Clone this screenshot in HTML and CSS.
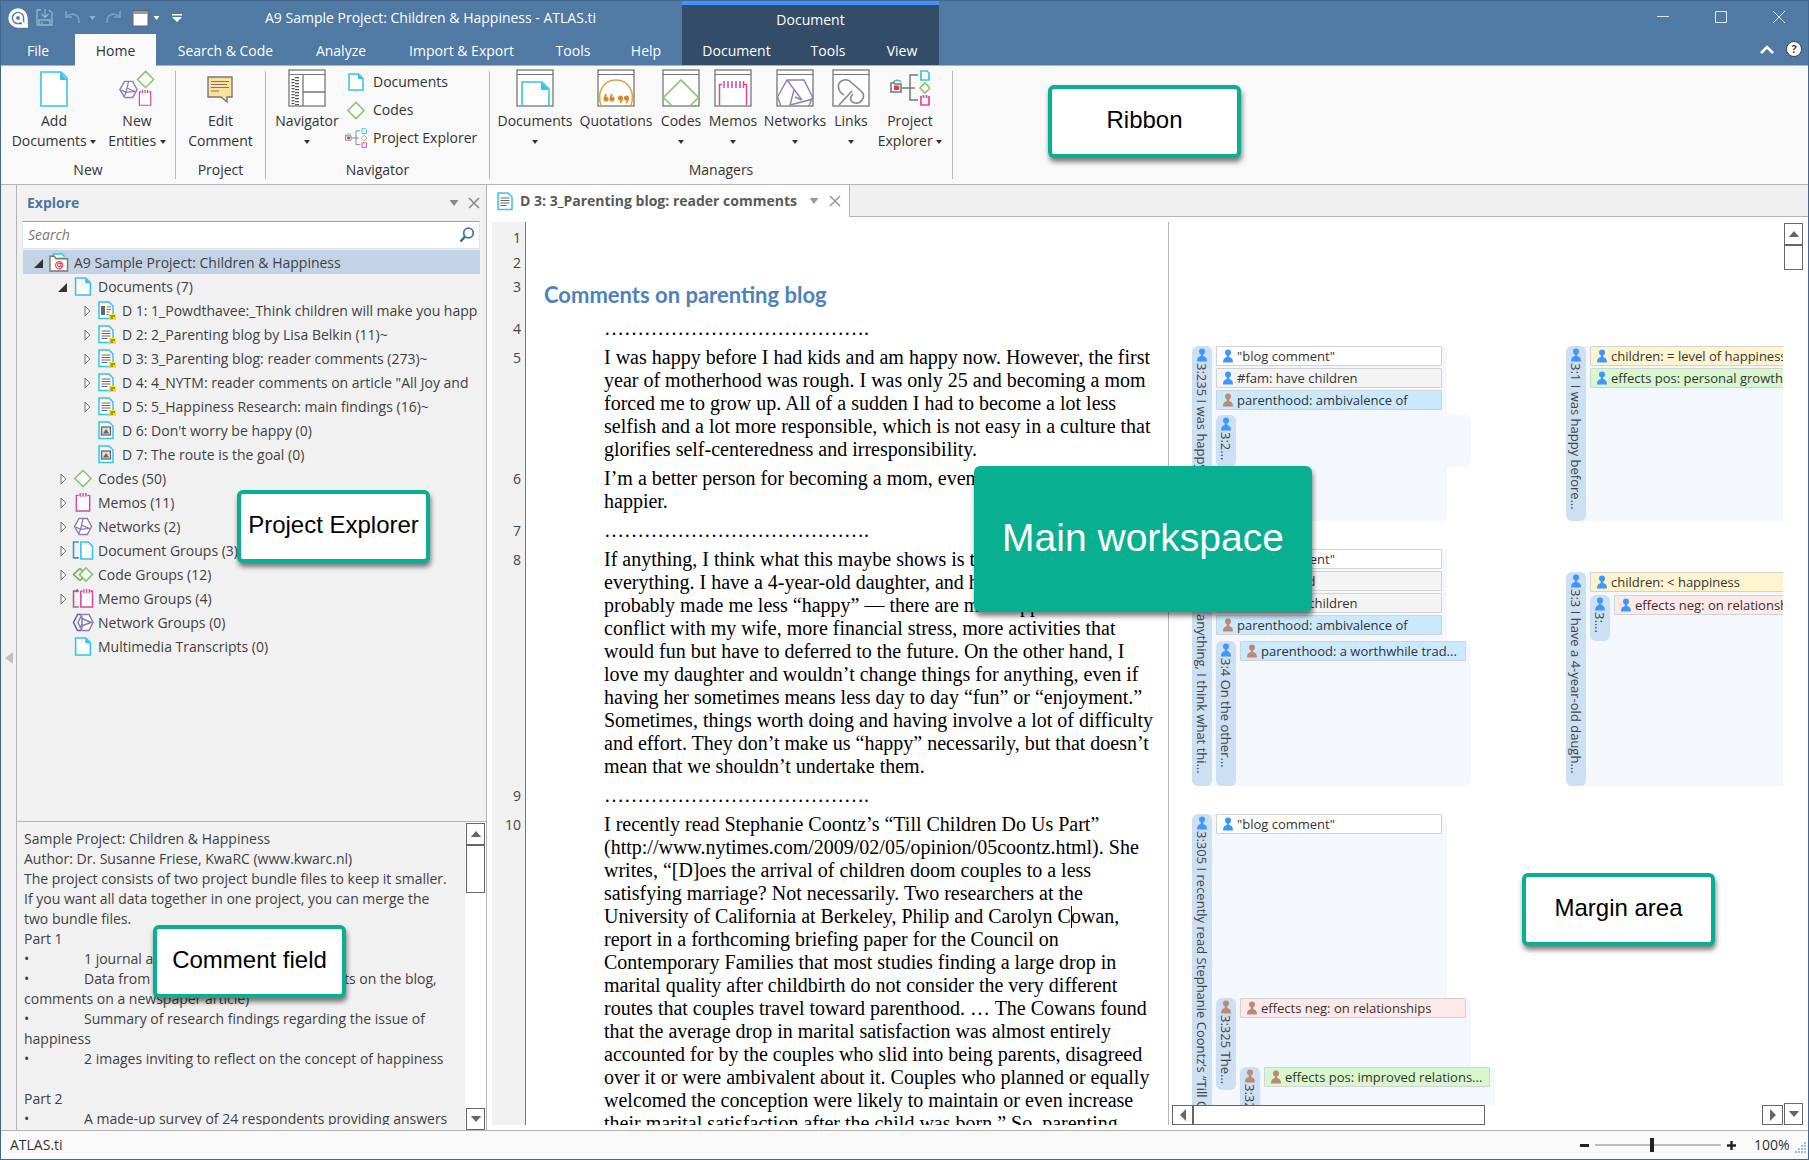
FILE: index.html
```html
<!DOCTYPE html>
<html lang="en">
<head>
<meta charset="utf-8">
<title>A9 Sample Project: Children &amp; Happiness - ATLAS.ti</title>
<link rel="stylesheet" href="styles.css">
</head>
<body>
<svg class="defs" aria-hidden="true">
  <symbol id="i-doc" viewBox="0 0 16 18"><path d="M1 1h9.500l4.500 4.500V17H1z" fill="#fff" stroke="#36c3ea" stroke-width="1.500"/><path d="M10 1v5h5z" fill="#36c3ea"/></symbol>
  <symbol id="i-doctext" viewBox="0 0 18 19"><path d="M1 1h10l4 4v12.500H1z" fill="#fff" stroke="#36c3ea" stroke-width="1.500"/><path d="M3.500 6h9M3.500 8.500h9M3.500 11h9M3.500 13.500h6" stroke="#666" stroke-width="1.200"/></symbol>
  <symbol id="i-doccom" viewBox="0 0 18 19"><use href="#i-doctext"/><rect x="11" y="13" width="7" height="6" fill="#ffe100"/><path d="M12.500 15h4.500M12.500 17h2.500" stroke="#554800"/></symbol>
  <symbol id="i-docpdf" viewBox="0 0 18 19"><path d="M1 1h10l4 4v12.500H1z" fill="#fff" stroke="#36c3ea" stroke-width="1.500"/><rect x="3" y="5" width="4" height="9" fill="#666"/><path d="M8.500 6h4.500M8.500 8.500h4.500M8.500 11h3M8.500 13.500h2" stroke="#777" stroke-width="1.200"/><rect x="11" y="13" width="7" height="6" fill="#ffe100"/><path d="M12.500 15h4.500M12.500 17h2.500" stroke="#554800"/></symbol>
  <symbol id="i-docimg" viewBox="0 0 18 19"><path d="M1 1h10l4 4v12.500H1z" fill="#fff" stroke="#36c3ea" stroke-width="1.500"/><rect x="3.500" y="6" width="9" height="8" fill="#ddd" stroke="#666" stroke-width="1.300"/><path d="M5 12.500l3-4.500 3 4.500z" fill="#666"/></symbol>
  <symbol id="i-code" viewBox="0 0 20 20"><path d="M10 1.500l8.500 8.500-8.500 8.500L1.500 10z" fill="#fff" stroke="#86c76a" stroke-width="1.600"/></symbol>
  <symbol id="i-memo" viewBox="0 0 16 20"><path d="M1 2.500h2.500M12.500 2.500H15M1 2v17h14V2" fill="#fff" stroke="#d9479c" stroke-width="1.500"/><path d="M5 0v4M8 0v4M11 0v4" stroke="#d9479c" stroke-width="1.500"/></symbol>
  <symbol id="i-net" viewBox="0 0 20 20"><path d="M6 1.500h8.500L19 10l-4.500 8.500H6L1 10z" fill="#fff" stroke="#8d7db8" stroke-width="1.500"/><path d="M10 2L7.500 13 2 10.500M8.500 8.500l8 3.500-9 1-2 4.500" fill="none" stroke="#8d7db8" stroke-width="1.400"/></symbol>
  <symbol id="i-docgrp" viewBox="0 0 20 18"><path d="M6 1H1v15h5" fill="none" stroke="#4b93b1" stroke-width="1.500"/><path d="M8 1h7l4 4v12H8z" fill="#fff" stroke="#36c3ea" stroke-width="1.500"/></symbol>
  <symbol id="i-codegrp" viewBox="0 0 22 16"><path d="M8 2L1.500 8 8 14M8 2l3 3M8 14l3-3" fill="none" stroke="#75ad5c" stroke-width="1.700"/><path d="M14 1.500L20.500 8 14 14.500 7.500 8z" fill="#fff" stroke="#86c76a" stroke-width="1.700"/></symbol>
  <symbol id="i-memogrp" viewBox="0 0 20 18"><path d="M6 2H1v15h5M4.500 0v3" fill="none" stroke="#b0657c" stroke-width="1.500"/><path d="M8 2v15h11V2h-2M8 2h1.500" fill="#fff" stroke="#d9479c" stroke-width="1.500"/><path d="M11 0v4M13.500 0v4M16 0v4" stroke="#d9479c" stroke-width="1.200"/></symbol>
  <symbol id="i-netgrp" viewBox="0 0 22 18"><path d="M9 1H5.500L1.500 9l4 8H9" fill="none" stroke="#6c5ca0" stroke-width="1.500"/><path d="M10 1h7l4 8-4 8h-7L6 9z" fill="#fff" stroke="#8d7db8" stroke-width="1.500"/><path d="M10 3v12M10 5l9 4-11 4" fill="none" stroke="#8d7db8" stroke-width="1.700"/></symbol>
  <symbol id="i-project" viewBox="0 0 22 20"><path d="M5 5V1h9l3 3" fill="#fff" stroke="#36c3ea" stroke-width="1.500"/><path d="M1.500 19V3.500H6l2 2.500h12V19z" fill="#fff" stroke="#777" stroke-width="1.500"/><path d="M14 15.500a3.800 3.800 0 1 1 1-3v1c0 1.500-2 1.500-2 0v-3m0 2a1.800 1.800 0 1 1-3.600 0 1.800 1.800 0 0 1 3.600 0" fill="none" stroke="#e8394a" stroke-width="1.100"/></symbol>
  <symbol id="i-pe" viewBox="0 0 40 36"><path d="M3 13c1-3 6-4 8-1" fill="none" stroke="#36c3ea" stroke-width="1.500"/><path d="M1 22V13h3l1 1h6v8z" fill="#fff" stroke="#777" stroke-width="1.600"/><rect x="4" y="15.500" width="5" height="4.500" fill="#e8394a"/><path d="M12 18h13M28 5h-8v25h8" fill="none" stroke="#777" stroke-width="1.500"/><path d="M31 1h6l2 2v7h-8z" fill="#fff" stroke="#36c3ea" stroke-width="1.700"/><path d="M35 13l5 5-5 5-5-5z" fill="#fff" stroke="#86c76a" stroke-width="1.700"/><path d="M31 26v9h8v-9M33.500 25v3M36.500 25v3" fill="none" stroke="#d9479c" stroke-width="1.700"/></symbol>
  <symbol id="i-frame" viewBox="0 0 38 38"><rect x="1" y="1" width="36" height="36" fill="#fff" stroke="#777" stroke-width="1.300"/><path d="M1 5.500h36" stroke="#777" stroke-width="1.200"/></symbol>
  <symbol id="i-user" viewBox="0 0 10 14"><circle cx="5" cy="3.500" r="3" fill="currentColor"/><path d="M3.800 6h2.400v2C9 8.500 10 10.500 10 13.500H0C0 10.500 1 8.500 3.800 8z" fill="currentColor"/></symbol>
  <symbol id="i-down" viewBox="0 0 6 4"><path d="M0 0h6L3 4z" fill="currentColor"/></symbol>
  <symbol id="i-up" viewBox="0 0 12 7"><path d="M0 7h12L6 0z" fill="currentColor"/></symbol>
  <symbol id="i-open" viewBox="0 0 12 12"><path d="M10 2v9H1z" fill="#333"/></symbol>
  <symbol id="i-shut" viewBox="0 0 12 12"><path d="M4 1v10L9 6z" fill="#fff" stroke="#777"/></symbol>
  <symbol id="i-x" viewBox="0 0 12 12"><path d="M1 1l10 10M11 1L1 11" fill="none" stroke="currentColor" stroke-width="1.500"/></symbol>
</svg>

<div class="window">
  <header class="header">
    <div class="head-main">
      <div class="title-row">
        <div class="quick">
          <svg width="20" height="20" viewBox="0 0 20 20"><path d="M10 18a8 8 0 1 1 8-8v8M10 18h10" fill="none" stroke="#fff" stroke-width="3.400"/><circle cx="10" cy="10" r="3.400" fill="none" stroke="#fff" stroke-width="3"/><path d="M13.500 10c0 4 1 6 4 7" fill="none" stroke="#fff" stroke-width="2"/></svg>
          <button aria-label="Save"><svg width="17" height="17" viewBox="0 0 17 17" fill="none" stroke="#8fb6cf" stroke-width="1.300"><path d="M5 1H1v15h15V4l-3-3M3 16v-5h11v5M6 12.500v3"/><path d="M9 0v8M5.500 5L9 8.500 12.500 5"/></svg></button>
          <button aria-label="Undo"><svg width="20" height="17" viewBox="0 0 20 17" fill="none" stroke="#7ea3c2" stroke-width="1.700"><path d="M5 2v6h6M5 8c3-3 8-4 11-1 2 2 2 5 2 7"/></svg></button>
          <button aria-label="Undo history" class="dim"><svg width="7" height="4"><use href="#i-down"/></svg></button>
          <button aria-label="Redo"><svg width="18" height="17" viewBox="0 0 18 17" fill="none" stroke="#7ea3c2" stroke-width="1.700"><path d="M16 2v6h-6M16 8C13 5 8 4 5 7c-2 2-2 5-2 7"/></svg></button>
          <button aria-label="Window layout" class="split"><svg width="20" height="18" viewBox="0 0 20 18"><rect x="3" y="1.500" width="15" height="15.500" fill="#fff" stroke="#666"/><path d="M3 3.500h15" stroke="#999" stroke-width="3"/></svg><svg width="7" height="4"><use href="#i-down"/></svg></button>
          <button aria-label="Customize toolbar"><svg width="16" height="10" viewBox="0 0 16 10" fill="#fff"><path d="M4 1h10v1.500H4zM4 4h10L9 9z"/></svg></button>
        </div>
        <div class="app-title">A9 Sample Project: Children &amp; Happiness - ATLAS.ti</div>
      </div>
      <nav class="tabs">
        <button class="tab w74">File</button>
        <button class="tab w81 active">Home</button>
        <button class="tab w139">Search &amp; Code</button>
        <button class="tab w92">Analyze</button>
        <button class="tab w149">Import &amp; Export</button>
        <button class="tab w74">Tools</button>
        <button class="tab w72">Help</button>
      </nav>
    </div>
    <div class="context">
      <div class="context-title">Document</div>
      <nav class="tabs">
        <button class="tab w109">Document</button>
        <button class="tab w74">Tools</button>
        <button class="tab w74">View</button>
      </nav>
    </div>
    <div class="head-right">
      <div class="win-btns">
        <button aria-label="Minimize"><svg width="12" height="12" viewBox="0 0 12 12"><path d="M0 5.500h12" stroke="#dfe9f2"/></svg></button>
        <button aria-label="Maximize"><svg width="12" height="12" viewBox="0 0 12 12"><path d="M.5.500h11v11H.5z" fill="none" stroke="#dfe9f2"/></svg></button>
        <button aria-label="Close"><svg width="12" height="12" viewBox="0 0 12 12"><path d="M0 0l12 12M12 0L0 12" stroke="#dfe9f2"/></svg></button>
      </div>
      <div class="help-btns">
        <button aria-label="Collapse ribbon"><svg width="14" height="9" viewBox="0 0 14 9"><path d="M1 8l6-6 6 6" fill="none" stroke="#fff" stroke-width="2.600"/></svg></button>
        <button aria-label="Help" class="help">?</button>
      </div>
    </div>
  </header>

  <section class="ribbon">
    <div class="group g-new">
      <div class="items">
        <button class="big w92"><svg width="30" height="38" viewBox="0 0 30 38"><path d="M2 3h20l6 6v28H2z" fill="#fff" stroke="#36c3ea" stroke-width="1.600"/><path d="M21 3v8h7z" fill="#36c3ea"/></svg><span>Add</span><span>Documents <svg class="c" width="6" height="4"><use href="#i-down"/></svg></span></button>
        <button class="big w74"><svg width="38" height="40" viewBox="0 0 38 40"><svg x="0" y="11" width="20" height="21"><use href="#i-net"/></svg><svg x="18" y="1" width="20" height="20"><use href="#i-code"/></svg><svg x="20" y="22" width="15" height="17"><use href="#i-memo"/></svg></svg><span>New</span><span>Entities <svg class="c" width="6" height="4"><use href="#i-down"/></svg></span></button>
      </div>
      <div class="glabel">New</div>
    </div>
    <div class="sep"></div>
    <div class="group g-project">
      <div class="items">
        <button class="big"><svg width="28" height="38" viewBox="0 0 28 38"><path d="M2 8h24v20h-5v5l-6-5H2z" fill="#fbe19a" stroke="#777" stroke-width="1.400"/><path d="M5 12.500h18M5 15.500h16M5 18.500h18M5 22h8" stroke="#777" stroke-width="1.200"/></svg><span>Edit</span><span>Comment</span></button>
      </div>
      <div class="glabel">Project</div>
    </div>
    <div class="sep"></div>
    <div class="group g-nav">
      <div class="items">
        <button class="big w74"><svg width="38" height="38" viewBox="0 0 38 38"><use href="#i-frame"/><path d="M15 6v31M15 23h22" stroke="#777" stroke-width="1.300"/><path d="M5 10v25" stroke="#555" stroke-width="3" stroke-dasharray="1.200 1.800"/><path d="M9 8v28" stroke="#555" stroke-width="4" stroke-dasharray="1.200 1.800"/></svg><span>Navigator</span><span><svg class="c" width="6" height="4"><use href="#i-down"/></svg></span></button>
        <div class="list">
          <button><svg width="22" height="18"><use href="#i-doc"/></svg>Documents</button>
          <button><svg width="22" height="19"><use href="#i-code"/></svg>Codes</button>
          <button><svg width="22" height="20"><use href="#i-pe"/></svg>Project Explorer</button>
        </div>
      </div>
      <div class="glabel">Navigator</div>
    </div>
    <div class="sep"></div>
    <div class="group g-man">
      <div class="items">
        <button class="big w78"><svg width="38" height="38" viewBox="0 0 38 38"><use href="#i-frame"/><path d="M6 36V13h20l7 7v16" fill="none" stroke="#36c3ea" stroke-width="1.600"/><path d="M25 13v8h8z" fill="#36c3ea"/></svg><span>Documents</span><span><svg class="c" width="6" height="4"><use href="#i-down"/></svg></span></button>
        <button class="big w84"><svg width="38" height="38" viewBox="0 0 38 38"><use href="#i-frame"/><path d="M4 36C0 25 5 11 19 11s19 14 15 25" fill="none" stroke="#e5a04c" stroke-width="1.600"/><g fill="#d98a26"><circle cx="9" cy="30" r="2.600"/><circle cx="15" cy="30" r="2.600"/><circle cx="23.500" cy="29" r="2.600"/><circle cx="29.500" cy="29" r="2.600"/></g><path d="M7.500 30c0-3 .5-4 2-5M13.500 30c0-3 .5-4 2-5M25 29c0 3-.5 4-2 5M31 29c0 3-.5 4-2 5" fill="none" stroke="#d98a26" stroke-width="1.700"/></svg><span>Quotations</span><span></span></button>
        <button class="big w46"><svg width="38" height="38" viewBox="0 0 38 38"><use href="#i-frame"/><path d="M10 37L1.500 28.500 19 11l17.500 17.500L28 37" fill="none" stroke="#86c76a" stroke-width="1.600"/></svg><span>Codes</span><span><svg class="c" width="6" height="4"><use href="#i-down"/></svg></span></button>
        <button class="big w58"><svg width="38" height="38" viewBox="0 0 38 38"><use href="#i-frame"/><path d="M5.500 36V15.500H8M32.500 36V15.500H30M10 12v7M14 12v7M18 12v7M22 12v7M26 12v7M29.500 12v7" fill="none" stroke="#d9479c" stroke-width="1.500"/></svg><span>Memos</span><span><svg class="c" width="6" height="4"><use href="#i-down"/></svg></span></button>
        <button class="big w66"><svg width="38" height="38" viewBox="0 0 38 38"><use href="#i-frame"/><path d="M6 37L1.500 28 11 11h17l9 16-2 4M11 11l4 2 20 17-20 5zM17 20l-4 15M2 29l4 8" fill="none" stroke="none"/><path d="M5 37L1.500 28 11 11h17l8.500 17-3.500 9M11 11l15 20M18 21l-4 15M14 36l23-6M26 31l-7-3" fill="none" stroke="#8d7db8" stroke-width="1.400"/></svg><span>Networks</span><span><svg class="c" width="6" height="4"><use href="#i-down"/></svg></span></button>
        <button class="big w46"><svg width="38" height="38" viewBox="0 0 38 38"><use href="#i-frame"/><path d="M12 26C5 22 4 13 12 11c4-1 6 1 8 3l10 9c4 5-1 12-7 11-5-1-6-5-2-9M7 36l13-14" fill="none" stroke="#888" stroke-width="1.600"/></svg><span>Links</span><span><svg class="c" width="6" height="4"><use href="#i-down"/></svg></span></button>
        <button class="big w72"><svg width="40" height="36"><use href="#i-pe"/></svg><span>Project</span><span>Explorer <svg class="c" width="6" height="4"><use href="#i-down"/></svg></span></button>
      </div>
      <div class="glabel">Managers</div>
    </div>
    <div class="sep"></div>
    <div class="callout at-ribbon">Ribbon</div>
  </section>

  <main class="main">
    <button class="strip" aria-label="Collapse panel"><svg width="8" height="12" viewBox="0 0 8 12"><path d="M8 0v12L0 6z" fill="#c0c0c0"/></svg></button>

    <aside class="explorer">
      <div class="panel-head"><h2>Explore</h2><button aria-label="Panel menu"><svg width="10" height="6"><use href="#i-down"/></svg></button><button aria-label="Close panel"><svg width="12" height="12"><use href="#i-x"/></svg></button></div>
      <div class="search"><input type="text" placeholder="Search" aria-label="Search"><svg width="16" height="16" viewBox="0 0 16 16"><circle cx="9.500" cy="6" r="4.800" fill="#fff" stroke="#3f76ae" stroke-width="1.800"/><path d="M6 9.500L1.500 14.500" stroke="#3666a0" stroke-width="2.400"/></svg></div>
      <ul class="tree">
        <li class="l0 sel"><svg class="e"><use href="#i-open"/></svg><svg class="i"><use href="#i-project"/></svg><span>A9 Sample Project: Children &amp; Happiness</span></li>
        <li class="l1"><svg class="e"><use href="#i-open"/></svg><svg class="i"><use href="#i-doc"/></svg><span>Documents (7)</span></li>
        <li class="l2"><svg class="e"><use href="#i-shut"/></svg><svg class="i"><use href="#i-docpdf"/></svg><span>D 1: 1_Powdthavee:_Think children will make you happ</span></li>
        <li class="l2"><svg class="e"><use href="#i-shut"/></svg><svg class="i"><use href="#i-doccom"/></svg><span>D 2: 2_Parenting blog by Lisa Belkin (11)~</span></li>
        <li class="l2"><svg class="e"><use href="#i-shut"/></svg><svg class="i"><use href="#i-doccom"/></svg><span>D 3: 3_Parenting blog: reader comments (273)~</span></li>
        <li class="l2"><svg class="e"><use href="#i-shut"/></svg><svg class="i"><use href="#i-doccom"/></svg><span>D 4: 4_NYTM: reader comments on article "All Joy and</span></li>
        <li class="l2"><svg class="e"><use href="#i-shut"/></svg><svg class="i"><use href="#i-doccom"/></svg><span>D 5: 5_Happiness Research: main findings (16)~</span></li>
        <li class="l2"><svg class="e"></svg><svg class="i"><use href="#i-docimg"/></svg><span>D 6: Don't worry be happy (0)</span></li>
        <li class="l2"><svg class="e"></svg><svg class="i"><use href="#i-docimg"/></svg><span>D 7: The route is the goal (0)</span></li>
        <li class="l1"><svg class="e"><use href="#i-shut"/></svg><svg class="i"><use href="#i-code"/></svg><span>Codes (50)</span></li>
        <li class="l1"><svg class="e"><use href="#i-shut"/></svg><svg class="i"><use href="#i-memo"/></svg><span>Memos (11)</span></li>
        <li class="l1"><svg class="e"><use href="#i-shut"/></svg><svg class="i"><use href="#i-net"/></svg><span>Networks (2)</span></li>
        <li class="l1"><svg class="e"><use href="#i-shut"/></svg><svg class="i"><use href="#i-docgrp"/></svg><span>Document Groups (3)</span></li>
        <li class="l1"><svg class="e"><use href="#i-shut"/></svg><svg class="i"><use href="#i-codegrp"/></svg><span>Code Groups (12)</span></li>
        <li class="l1"><svg class="e"><use href="#i-shut"/></svg><svg class="i"><use href="#i-memogrp"/></svg><span>Memo Groups (4)</span></li>
        <li class="l1"><svg class="e"></svg><svg class="i"><use href="#i-netgrp"/></svg><span>Network Groups (0)</span></li>
        <li class="l1"><svg class="e"></svg><svg class="i"><use href="#i-doc"/></svg><span>Multimedia Transcripts (0)</span></li>
      </ul>
      <div class="comment">
        <div class="comment-text">
          <p>Sample Project: Children &amp; Happiness</p>
          <p>Author: Dr. Susanne Friese, KwaRC (www.kwarc.nl)</p>
          <p>The project consists of two project bundle files to keep it smaller.<br>If you want all data together in one project, you can merge the<br>two bundle files.</p>
          <p>Part 1</p>
          <p class="b">1 journal article</p>
          <p class="b">Data from a parenting blog (all comments on the blog,<br>comments on a newspaper article)</p>
          <p class="b">Summary of research findings regarding the issue of<br>happiness</p>
          <p class="b">2 images inviting to reflect on the concept of happiness</p>
          <p>&nbsp;</p>
          <p>Part 2</p>
          <p class="b">A made-up survey of 24 respondents providing answers</p>
        </div>
        <div class="vbar">
          <button aria-label="Scroll up"><svg width="12" height="6"><use href="#i-up"/></svg></button>
          <div class="thumb tall"></div>
          <button aria-label="Scroll down" class="end"><svg class="flip" width="12" height="6"><use href="#i-up"/></svg></button>
        </div>
      </div>
      <div class="callout at-explorer">Project Explorer</div>
      <div class="callout at-comment">Comment field</div>
    </aside>

    <section class="work">
      <div class="doc-tabs">
        <div class="doc-tab"><svg width="18" height="19"><use href="#i-doctext"/></svg><span>D 3: 3_Parenting blog: reader comments</span><button aria-label="Tab menu"><svg width="10" height="6"><use href="#i-down"/></svg></button><button aria-label="Close tab"><svg width="12" height="12"><use href="#i-x"/></svg></button></div>
      </div>
      <div class="doc-area">
        <article class="doc">
          <div class="row head"><span class="n">1</span></div>
          <div class="row head"><span class="n">2</span></div>
          <div class="row title"><span class="n">3</span><h1>Comments on parenting blog</h1></div>
          <div class="row"><span class="n">4</span><p>………………………………….</p></div>
          <div class="row"><span class="n">5</span><p>I was happy before I had kids and am happy now. However, the first<br>year of motherhood was rough. I was only 25 and becoming a mom<br>forced me to grow up. All of a sudden I had to become a lot less<br>selfish and a lot more responsible, which is not easy in a culture that<br>glorifies self-centeredness and irresponsibility.</p></div>
          <div class="row"><span class="n">6</span><p>I’m a better person for becoming a mom, even if I am not<br>happier.</p></div>
          <div class="row"><span class="n">7</span><p>………………………………….</p></div>
          <div class="row"><span class="n">8</span><p>If anything, I think what this maybe shows is that money isn’t<br>everything. I have a 4-year-old daughter, and having her has<br>probably made me less “happy” — there are more opportunities for<br>conflict with my wife, more financial stress, more activities that<br>would fun but have to deferred to the future. On the other hand, I<br>love my daughter and wouldn’t change things for anything, even if<br>having her sometimes means less day to day “fun” or “enjoyment.”<br>Sometimes, things worth doing and having involve a lot of difficulty<br>and effort. They don’t make us “happy” necessarily, but that doesn’t<br>mean that we shouldn’t undertake them.</p></div>
          <div class="row"><span class="n">9</span><p>………………………………….</p></div>
          <div class="row"><span class="n">10</span><p>I recently read Stephanie Coontz’s “Till Children Do Us Part”<br>(http://www.nytimes.com/2009/02/05/opinion/05coontz.html). She<br>writes, “[D]oes the arrival of children doom couples to a less<br>satisfying marriage? Not necessarily. Two researchers at the<br>University of California at Berkeley, Philip and Carolyn C<span class="cursor"></span>owan,<br>report in a forthcoming briefing paper for the Council on<br>Contemporary Families that most studies finding a large drop in<br>marital quality after childbirth do not consider the very different<br>routes that couples travel toward parenthood. … The Cowans found<br>that the average drop in marital satisfaction was almost entirely<br>accounted for by the couples who slid into being parents, disagreed<br>over it or were ambivalent about it. Couples who planned or equally<br>welcomed the conception were likely to maintain or even increase<br>their marital satisfaction after the child was born.” So, parenting</p></div>
        </article>
        <div class="margin">
          <div class="canvas">
            <div class="q" style="left:23px;top:124px;height:175px"><div class="bar"><svg><use href="#i-user"/></svg><span>3:235 I was happy before…</span></div>
              <div class="codes"><div class="code white"><svg><use href="#i-user"/></svg>"blog comment"</div><div class="code gray"><svg><use href="#i-user"/></svg>#fam: have children</div><div class="code blue alt"><svg><use href="#i-user"/></svg>parenthood: ambivalence of</div></div></div>
            <div class="q" style="left:47px;top:193px;height:52px"><div class="bar"><svg><use href="#i-user"/></svg><span>3:2…</span></div><div class="codes"></div></div>
            <div class="q" style="left:397px;top:124px;height:175px"><div class="bar"><svg><use href="#i-user"/></svg><span>3:1 I was happy before…</span></div>
              <div class="codes"><div class="code yellow"><svg><use href="#i-user"/></svg>children: = level of happiness</div><div class="code green"><svg><use href="#i-user"/></svg>effects pos: personal growth</div></div></div>
            <div class="q" style="left:23px;top:327px;height:237px"><div class="bar"><svg><use href="#i-user"/></svg><span>3:236 If anything, I think what thi…</span></div>
              <div class="codes"><div class="code white"><svg><use href="#i-user"/></svg>"blog comment"</div><div class="code gray"><svg><use href="#i-user"/></svg>#fam: 1 child</div><div class="code gray"><svg><use href="#i-user"/></svg>#fam: have children</div><div class="code blue alt"><svg><use href="#i-user"/></svg>parenthood: ambivalence of</div></div></div>
            <div class="q" style="left:47px;top:419px;height:145px"><div class="bar"><svg><use href="#i-user"/></svg><span>3:4 On the other…</span></div>
              <div class="codes"><div class="code blue alt"><svg><use href="#i-user"/></svg>parenthood: a worthwhile trad...</div></div></div>
            <div class="q" style="left:397px;top:350px;height:214px"><div class="bar"><svg><use href="#i-user"/></svg><span>3:3 I have a 4-year-old daugh…</span></div>
              <div class="codes"><div class="code yellow"><svg><use href="#i-user"/></svg>children: &lt; happiness</div></div></div>
            <div class="q" style="left:421px;top:373px;height:46px"><div class="bar"><svg><use href="#i-user"/></svg><span>3:…</span></div>
              <div class="codes"><div class="code pink"><svg><use href="#i-user"/></svg>effects neg: on relationships</div></div></div>
            <div class="q" style="left:23px;top:592px;height:400px"><div class="bar"><svg><use href="#i-user"/></svg><span>3:305 I recently read Stephanie Coontz’s “Till Children</span></div>
              <div class="codes"><div class="code white"><svg><use href="#i-user"/></svg>"blog comment"</div></div></div>
            <div class="q" style="left:47px;top:776px;height:92px"><div class="bar alt"><svg><use href="#i-user"/></svg><span>3:325 The…</span></div>
              <div class="codes"><div class="code pink alt"><svg><use href="#i-user"/></svg>effects neg: on relationships</div></div></div>
            <div class="q" style="left:71px;top:845px;height:92px"><div class="bar alt"><svg><use href="#i-user"/></svg><span>3:326 The…</span></div>
              <div class="codes"><div class="code green alt"><svg><use href="#i-user"/></svg>effects pos: improved relations...</div></div></div>
          </div>
          <div class="hbar">
            <button aria-label="Scroll left"><svg width="6" height="12" viewBox="0 0 6 12"><path d="M6 0v12L0 6z" fill="#666"/></svg></button>
            <div class="thumb wide"></div>
            <button aria-label="Scroll right" class="end"><svg width="6" height="12" viewBox="0 0 6 12"><path d="M0 0v12l6-6z" fill="#666"/></svg></button>
          </div>
          <div class="callout at-margin">Margin area</div>
        </div>
        <div class="vbar">
          <button aria-label="Scroll up"><svg width="12" height="6"><use href="#i-up"/></svg></button>
          <div class="thumb"></div>
          <button aria-label="Scroll down" class="end"><svg class="flip" width="12" height="6"><use href="#i-up"/></svg></button>
        </div>
      </div>
      <div class="callout at-work">Main workspace</div>
    </section>
  </main>

  <footer class="status">
    <span>ATLAS.ti</span>
    <div class="zoom">
      <button aria-label="Zoom out"><svg width="11" height="11" viewBox="0 0 11 11"><path d="M1 5.500h9" stroke="#222" stroke-width="3"/></svg></button>
      <input type="range" min="0" max="100" value="45" aria-label="Zoom">
      <button aria-label="Zoom in"><svg width="11" height="11" viewBox="0 0 11 11"><path d="M1 5.500h9M5.500 1v9" stroke="#222" stroke-width="2.400"/></svg></button>
      <span class="pct">100%</span>
      <svg class="grip" width="12" height="14" viewBox="0 0 12 14" fill="#a9bdd2"><path d="M9 1h2v2H9zM6 4h2v2H6zM9 4h2v2H9zM3 7h2v2H3zM6 7h2v2H6zM9 7h2v2H9zM0 10h2v2H0zM3 10h2v2H3zM6 10h2v2H6zM9 10h2v2H9z"/></svg>
    </div>
  </footer>
</div>
</body>
</html>
```
FILE: styles.css
```css
* { box-sizing: border-box; }
body, h1, h2, p, ul { margin: 0; padding: 0; }
body { font: 14px/20px "Open Sans", "Noto Sans", sans-serif; color: #333; }
button { font: inherit; color: inherit; background: none; border: 0; padding: 0; margin: 0; }
svg { display: block; flex: none; }
.defs { position: absolute; width: 0; height: 0; }

.window { height: 100vh; display: flex; flex-direction: column; overflow: hidden; background: #f9f9f9; border: 1px solid #41668f; }

/* Title bar and tabs */
.header { display: flex; height: 65px; flex: none; background: #5079a3; color: #fff; border-bottom: 1px solid #b0b4b8; }
.head-main { display: flex; flex-direction: column; }
.title-row { display: flex; align-items: center; height: 33px; }
.quick { display: flex; align-items: center; gap: 8px; width: 264px; padding-left: 7px; }
.quick .dim { color: #8fb6cf; }
.quick .split { display: flex; align-items: center; gap: 3px; }
.app-title { white-space: nowrap; }
.tabs { display: flex; height: 31px; }
.tab { text-align: center; white-space: nowrap; height: 31px; padding-top: 3px; }
.tab.active { background: #f9f9f9; color: #333; height: 32px; padding-top: 2px; }
.context { display: flex; flex-direction: column; background: #334d68; border-top: 4px solid #3f93fb; }
.context-title { height: 29px; line-height: 30px; text-align: center; }
.w46 { width: 46px; } .w58 { width: 58px; } .w66 { width: 66px; } .w72 { width: 72px; }
.w74 { width: 74px; } .w78 { width: 78px; } .w81 { width: 81px; } .w84 { width: 84px; }
.w92 { width: 92px; } .w109 { width: 109px; } .w139 { width: 139px; } .w149 { width: 149px; }
.head-right { margin-left: auto; display: flex; flex-direction: column; }
.win-btns { display: flex; height: 32px; }
.win-btns button { width: 58px; display: flex; align-items: center; justify-content: center; }
.help-btns { display: flex; justify-content: flex-end; align-items: center; gap: 12px; height: 32px; padding-right: 6px; }
.help { width: 16px; height: 16px; border-radius: 8px; background: #fff; color: #444; border: 1px solid #444; font-weight: 700; font-size: 11px; line-height: 14px; }

/* Ribbon */
.ribbon { position: relative; display: flex; flex: none; height: 119px; background: #f9f9f9; border-bottom: 1px solid #b4b4b4; }
.group { display: flex; flex-direction: column; padding-top: 3px; }
.items { display: flex; height: 91px; }
.g-new { width: 174px; } .g-new .items { padding-left: 7px; }
.g-project { width: 89px; } .g-project .items { justify-content: center; }
.g-nav { width: 223px; } .g-nav .items { padding-left: 4px; }
.g-man { width: 462px; } .g-man .items { padding-left: 6px; }
.glabel { text-align: center; }
.sep { width: 1px; margin: 5px 0; background: #b8b8b8; }
.big { display: flex; flex-direction: column; align-items: center; white-space: nowrap; }
.big > svg { height: 38px; margin-bottom: 4px; overflow: visible; }
.big span { height: 20px; }
.c { display: inline-block; vertical-align: 2px; }
.list { display: flex; flex-direction: column; }
.list button { display: flex; align-items: center; gap: 6px; height: 28px; padding-bottom: 2px; margin-left: 1px; white-space: nowrap; }

/* Left side */
.main { flex: 1; display: flex; min-height: 0; background: #f1f1f1; }
.strip { width: 16px; flex: none; display: flex; align-items: center; justify-content: center; border-right: 1px solid #b4b4b4; }
.explorer { position: relative; width: 470px; flex: none; display: flex; flex-direction: column; border-right: 1px solid #b4b4b4; color: #3f3f3f; }
.panel-head { display: flex; align-items: center; gap: 9px; height: 36px; padding: 0 6px 0 10px; color: #8a8a8a; }
.panel-head h2 { font-size: 14px; line-height: 20px; color: #4a76a3; margin-right: auto; }
.search { display: flex; align-items: center; height: 28px; margin: 0 6px 1px 5px; padding: 0 4px; background: #fff; border: 1px solid #dde4ee; border-top-color: #a0a0a0; }
.search input { flex: 1; border: 0; outline: 0; padding: 0 1px; background: none; font: italic 14px/20px "Open Sans", sans-serif; }
.search input::placeholder { color: #777; opacity: 1; }
.tree { flex: 1; min-height: 0; overflow: hidden; list-style: none; margin: 0 6px; }
.tree li { display: flex; align-items: center; height: 24px; padding-top: 1px; overflow: hidden; white-space: nowrap; }
.tree .sel { background: #c3d3e6; }
.tree .e { width: 12px; height: 12px; margin-right: 3px; }
.tree .i { width: 22px; height: 19px; margin-right: 4px; }
.l0 { padding-left: 10px; } .l1 { padding-left: 34px; } .l2 { padding-left: 58px; }
.comment { flex: none; display: flex; height: 309px; border-top: 1px solid #b4b4b4; }
.comment-text { flex: 1; height: 303px; overflow: hidden; padding: 7px 0 0 7px; white-space: nowrap; }
.comment-text .b::before { content: "•"; display: inline-block; width: 60px; }

/* Scroll bars */
.vbar { width: 21px; flex: none; display: flex; flex-direction: column; align-items: flex-start; background: #fff; padding: 1px 1px 0; color: #666; }
.vbar button { width: 19px; height: 22px; border: 1px solid #666; background: #fff; display: flex; align-items: center; justify-content: center; }
.vbar .end { margin-top: auto; }
.thumb { width: 19px; height: 25px; background: #fff; border: 1px solid #666; }
.thumb.tall { height: 48px; }
.flip { transform: rotate(180deg); }
.hbar { display: flex; flex: none; height: 20px; padding: 0 0 0 3px; }
.hbar button { width: 21px; border: 1px solid #666; background: #fff; display: flex; align-items: center; justify-content: center; }
.hbar .end { margin-left: auto; }
.thumb.wide { width: 292px; height: 20px; }

/* Workspace */
.work { position: relative; flex: 1; min-width: 0; display: flex; flex-direction: column; background: #fff; }
.doc-tabs { display: flex; height: 32px; flex: none; background: #efefef; border-bottom: 1px solid #b4b4b4; }
.doc-tab { display: flex; align-items: center; height: 32px; padding: 0 8px 0 10px; background: #fff; border-right: 1px solid #b4b4b4; font-weight: 700; color: #595959; white-space: nowrap; }
.doc-tab span { margin: 0 12px 0 5px; }
.doc-tab button { color: #999; margin-right: 10px; }
.doc-tab button:last-child { margin-right: 0; }
.doc-area { flex: 1; min-height: 0; display: flex; padding: 5px 4px 5px 5px; }
.doc { width: 677px; flex: none; overflow: hidden; border-right: 1px solid #b4b4b4; }
.row { display: flex; font: 20px/23px "Liberation Serif", serif; color: #000; }
.row .n { width: 34px; flex: none; text-align: right; padding-right: 4px; background: #f1f1f1; border-right: 1px solid #777; color: #444; font: 14px/23px "Open Sans", sans-serif; }
.row p { padding: 0 0 6px 78px; white-space: nowrap; }
.row.head { height: 25px; }
.row.head .n { padding-top: 4px; }
.row.title { height: 45px; }
.row.title .n { padding-top: 3px; }
.row h1 { font: 700 22px/26px Lato, sans-serif; color: #4f81bd; padding: 10px 0 0 18px; }
.cursor { display: inline-block; width: 1px; height: 22px; margin-right: -1px; background: #000; vertical-align: -5px; }

.margin { position: relative; flex: 1; min-width: 0; display: flex; flex-direction: column; }
.canvas { position: relative; flex: 1; overflow: hidden; }
.q { position: absolute; display: flex; gap: 4px; width: 255px; padding-right: 5px; border-radius: 6px; background: #f4f8fc; }
.bar { width: 20px; flex: none; border-radius: 6px; background: #cddff2; color: #3d97ff; padding-top: 2px; overflow: hidden; }
.bar svg { width: 10px; height: 14px; margin: 0 auto 1px; }
.bar span { display: block; writing-mode: vertical-rl; width: 20px; line-height: 20px; white-space: nowrap; font-size: 13px; color: #444; }
.codes { flex: 1; display: flex; flex-direction: column; gap: 2px; }
.code { display: flex; align-items: center; gap: 4px; height: 20px; padding-left: 6px; border: 1px solid #cfd3d6; border-radius: 1px; font-size: 13px; line-height: 18px; white-space: nowrap; color: #333; }
.code svg { width: 10px; height: 14px; color: #3d97ff; }
.alt svg { color: #bd8a74; }
.white { background: #fff; } .gray { background: #f4f4f4; } .blue { background: #cae9ff; }
.yellow { background: #fff4cd; } .green { background: #d9f7cd; } .pink { background: #ffe8e8; }

/* Callouts over the window */
.callout { position: absolute; z-index: 2; width: 193px; height: 73px; padding-bottom: 3px; display: flex; align-items: center; justify-content: center; background: #fff; border: 4px solid #08b091; border-radius: 6px; box-shadow: 1px 4px 5px rgba(0,0,0,.5); color: #000; font: 24px/28px "Liberation Sans", sans-serif; white-space: nowrap; }
.at-ribbon { left: 1047px; top: 19px; }
.at-explorer { left: 220px; top: 305px; }
.at-comment { left: 136px; bottom: 132px; }
.at-margin { left: 353px; bottom: 179px; }
.at-work { left: 487px; top: 281px; width: 338px; height: 146px; padding-bottom: 2px; background: #08b091; color: #fff; font-size: 39px; line-height: 46px; }

/* Status bar */
.status { display: flex; align-items: center; flex: none; height: 29px; padding: 0 1px 0 9px; border-top: 1px solid #b4b4b4; background: #f9f9f9; }
.zoom { margin-left: auto; display: flex; align-items: center; gap: 5px; }
.zoom input { appearance: none; width: 126px; height: 14px; margin: 0; background: linear-gradient(#bdbdbd, #bdbdbd) center / 100% 2px no-repeat; }
.zoom input::-webkit-slider-thumb { appearance: none; width: 4px; height: 14px; background: #222; }
.pct { width: 36px; margin-left: 12px; }
.grip { align-self: flex-end; }
```
